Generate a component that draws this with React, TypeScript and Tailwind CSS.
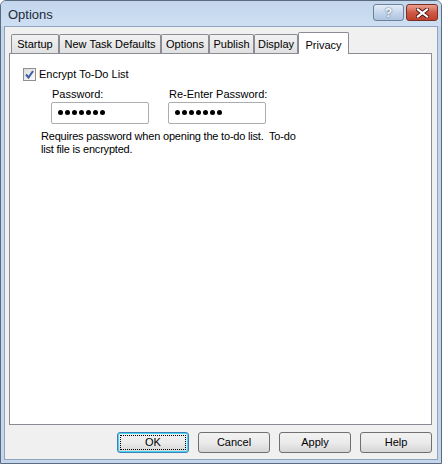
import React from "react";

const font = { fontFamily: '"Liberation Sans", Arial, sans-serif' };

const tabs = [
  { label: "Startup", w: "w-[48px]" },
  { label: "New Task Defaults", w: "w-[102px]" },
  { label: "Options", w: "w-[48px]" },
  { label: "Publish", w: "w-[45px]" },
  { label: "Display", w: "w-[44px]" },
];

const Dots = () => (
  <div className="flex gap-[2px] items-center">
    {Array.from({ length: 7 }).map((_, i) => (
      <span key={i} className="block w-[5px] h-[5px] rounded-full bg-black" />
    ))}
  </div>
);

const PasswordField = ({ label }: { label: string }) => (
  <div className="flex flex-col">
    <span className="h-[13px] leading-[13px] pl-[1px]">{label}</span>
    <div className="mt-[1px] w-[98px] h-[22px] bg-white border border-[#abadb3] rounded-[2px] flex items-center pl-[6px]">
      <Dots />
    </div>
  </div>
);

const Button = ({ title, isDefault }: { title: string; isDefault?: boolean }) => (
  <div
    className={
      "w-[72px] h-[21px] rounded-[3px] border flex items-center justify-center p-[2px] bg-gradient-to-b from-[#f2f2f2] via-[#ebebeb] to-[#d6d6d6] " +
      (isDefault ? "border-[#3c7fb1] shadow-[inset_0_0_0_1px_#48d4f8]" : "border-[#707070]")
    }
  >
    <div
      className={
        "w-full h-full flex items-center justify-center leading-none " +
        (isDefault ? "border border-dotted border-black" : "")
      }
    >
      {title}
    </div>
  </div>
);

export default function App() {
  return (
    <div
      style={font}
      className="w-[442px] h-[464px] flex flex-col text-[11px] text-black bg-[#c3d6ec] border border-[#5b6b7f] rounded-t-[6px] overflow-hidden"
    >
      {/* title bar */}
      <div className="h-[25px] flex items-center pl-[7px] pr-[3px] bg-gradient-to-b from-[#c3d6ec] to-[#cedff2]">
        <span className="text-[13px] text-[#1e2b3a] flex-1 pt-[2px]">Options</span>
        <div className="flex gap-[2px] mb-[2px]">
          <div className="w-[31px] h-[17px] rounded-[3px] border border-[#6d8199] bg-gradient-to-b from-[#e4edf8] via-[#c6d7ec] to-[#adc4e0] flex items-center justify-center text-[12px] font-bold text-[#f4f7fb] [text-shadow:0_0_2px_#3b4a5c]">
            ?
          </div>
          <div className="w-[32px] h-[17px] rounded-[3px] border border-[#7a2f24] bg-gradient-to-b from-[#e8a093] via-[#cf5a45] to-[#c0402c] flex items-center justify-center">
            <svg width="13" height="10" viewBox="0 0 13 10">
              <path d="M2 1.5 L11 8.5 M11 1.5 L2 8.5" stroke="#4a1510" strokeWidth="4" strokeLinecap="square" />
              <path d="M2 1.5 L11 8.5 M11 1.5 L2 8.5" stroke="#ffffff" strokeWidth="2.2" strokeLinecap="square" />
            </svg>
          </div>
        </div>
      </div>

      {/* client area inside the frame */}
      <div className="flex-1 flex flex-col px-[3px] pb-[3px]">
        <div className="flex-1 flex flex-col bg-[#f0f0f0] border border-[#8ea3bd] pl-[4px] pr-[5px] pt-[5px]">
          {/* tab strip */}
          <div className="flex items-end h-[21px] pl-[2px]">
            {tabs.map((t) => (
              <div
                key={t.label}
                className={
                  t.w +
                  " h-[19px] border border-b-0 border-[#898c95] rounded-t-[2px] bg-gradient-to-b from-[#f2f2f2] to-[#e0e0e0] flex items-center justify-center pt-[1px]"
                }
              >
                {t.label}
              </div>
            ))}
            <div className="relative z-10 w-[51px] h-[22px] -mb-[1px] border border-b-0 border-[#898c95] rounded-t-[2px] bg-white flex justify-center pt-[4px]">
              Privacy
            </div>
          </div>

          {/* page */}
          <div className="h-[372px] bg-white border border-[#898c95] pl-[13px] pt-[12px]">
            <div className="flex items-center gap-[3px]">
              <div className="w-[13px] h-[13px] border border-[#8f8f8f] bg-gradient-to-br from-[#dcdcdc] to-[#fbfbfb] flex items-center justify-center">
                <svg width="9" height="9" viewBox="0 0 9 9">
                  <path d="M1 4.5 L3.5 7.5 L8 1" fill="none" stroke="#3d5ba8" strokeWidth="2" />
                </svg>
              </div>
              <span>Encrypt To-Do List</span>
            </div>

            <div className="flex gap-[19px] mt-[5px] pl-[28px]">
              <PasswordField label="Password:" />
              <PasswordField label="Re-Enter Password:" />
            </div>

            <p className="mt-[6px] pl-[18px] leading-[13px] whitespace-pre tracking-[-0.2px]">
              {"Requires password when opening the to-do list.  To-do\nlist file is encrypted."}
            </p>
          </div>

          {/* buttons */}
          <div className="flex-1 flex items-center justify-end gap-[9px] pt-[1px]">
            <Button title="OK" isDefault />
            <Button title="Cancel" />
            <Button title="Apply" />
            <Button title="Help" />
          </div>
        </div>
      </div>
    </div>
  );
}
